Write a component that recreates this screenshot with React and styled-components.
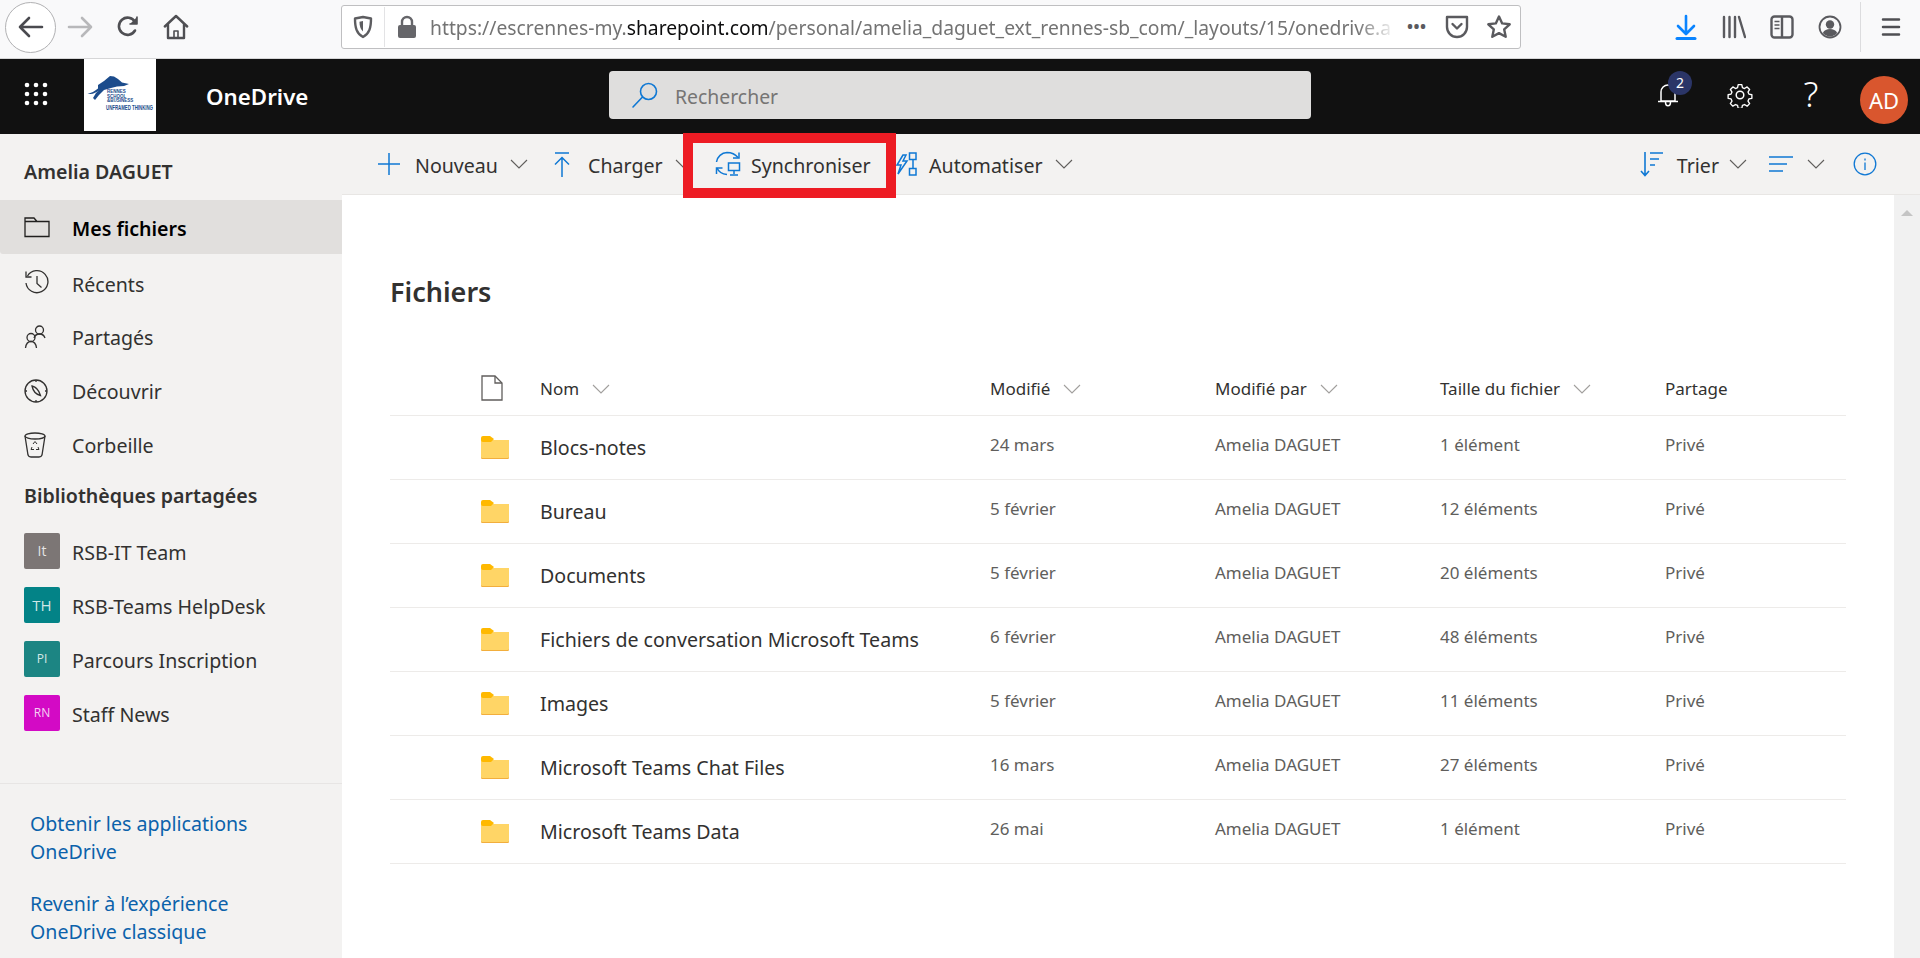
import React from 'react';
import styled, { createGlobalStyle } from 'styled-components';

const GlobalStyle = createGlobalStyle`
  html, body {
    margin: 0;
    padding: 0;
    height: 958px;
    overflow: hidden;
    background: #fff;
    font-family: "Noto Sans", "Open Sans", sans-serif;
    color: #323130;
  }
`;

const BLUE = '#0f78d4';

// ---- small drawings ----
const BackIcon = () => (
  <svg width="26" height="24" viewBox="0 0 26 24" fill="none" stroke="#4a4a4f" strokeWidth="2.6" strokeLinecap="round" strokeLinejoin="round">
    <path d="M2 12h22M11 3l-9 9 9 9" />
  </svg>
);
const ForwardIcon = () => (
  <svg width="26" height="24" viewBox="0 0 26 24" fill="none" stroke="#b8b8ba" strokeWidth="2.6" strokeLinecap="round" strokeLinejoin="round">
    <path d="M2 12h22M15 3l9 9-9 9" />
  </svg>
);
const ReloadIcon = () => (
  <svg width="24" height="24" viewBox="0 0 24 24" fill="none" stroke="#4f4f53" strokeWidth="2.6" strokeLinecap="round" strokeLinejoin="round">
    <path d="M19 15.500A8.600 8.600 0 1 1 19 7" />
    <path d="M21 2v7h-7" fill="#4f4f53" strokeWidth="1.600" />
  </svg>
);
const HomeIcon = () => (
  <svg width="26" height="26" viewBox="0 0 26 26" fill="none" stroke="#4f4f53" strokeWidth="2.400" strokeLinejoin="round" strokeLinecap="round">
    <path d="M1.800 12.500 13 2l11.200 10.500M5 10.500V24h16V10.500" />
    <path d="M11 24v-7h4v7" strokeWidth="1.600" />
  </svg>
);
const ShieldIcon = () => (
  <svg width="20" height="24" viewBox="0 0 20 24" fill="none">
    <path d="M10 2 2 3.500c0 9 1.500 15 8 18.500 6.500-3.500 8-9.500 8-18.500z" stroke="#5d5d60" strokeWidth="2.400" strokeLinejoin="round" />
    <path d="M10 6 6.500 6.800c0 4 .8 7.500 3.500 9.700z" fill="#5d5d60" />
  </svg>
);
const LockIcon = () => (
  <svg width="20" height="24" viewBox="0 0 20 24" fill="none">
    <path d="M5 11V7a5 5 0 0 1 10 0v4" stroke="#66666a" strokeWidth="2.400" />
    <rect x="1" y="10" width="18" height="13" rx="2" fill="#66666a" />
  </svg>
);
const PocketIcon = () => (
  <svg width="24" height="24" viewBox="0 0 24 24" fill="none" stroke="#5a5a5e" strokeWidth="2.400" strokeLinecap="round" strokeLinejoin="round">
    <path d="M2 2h20v10a10 10 0 0 1-20 0z" />
    <path d="m7.500 9 4.500 4.500L16.500 9" />
  </svg>
);
const StarIcon = () => (
  <svg width="26" height="26" viewBox="0 0 26 26" fill="none" stroke="#5a5a5e" strokeWidth="2.400" strokeLinejoin="round">
    <path d="m13 2.500 3.200 6.900 7.500.9-5.500 5.100 1.500 7.400-6.700-3.700-6.700 3.700 1.500-7.400-5.500-5.100 7.500-.9z" />
  </svg>
);
const DownloadIcon = () => (
  <svg width="22" height="26" viewBox="0 0 22 26" fill="none" stroke="#0a84ff" strokeWidth="2.600" strokeLinecap="round" strokeLinejoin="round">
    <path d="M11 2v17M3 12l8 8 8-8" />
    <path d="M2 24.500h18" strokeWidth="3" />
  </svg>
);
const LibraryIcon = () => (
  <svg width="24" height="24" viewBox="0 0 24 24" fill="none" stroke="#5a5a5e" strokeWidth="2.400" strokeLinecap="round">
    <path d="M2 2v20M7.500 2v20M13 2v20M17 2l6 20" />
  </svg>
);
const SidebarIcon = () => (
  <svg width="24" height="24" viewBox="0 0 24 24" fill="none" stroke="#5a5a5e" strokeWidth="2.400">
    <rect x="1.500" y="1.500" width="21" height="21" rx="3" />
    <path d="M12 2v20" />
    <path d="M4.500 6.500h5M4.500 10h5M4.500 13.500h5" strokeWidth="1.600" />
  </svg>
);
const AccountIcon = () => (
  <svg width="24" height="24" viewBox="0 0 24 24" fill="none">
    <circle cx="12" cy="12" r="10.500" stroke="#5a5a5e" strokeWidth="1.800" />
    <circle cx="12" cy="9.500" r="4.200" fill="#5a5a5e" />
    <path d="M4.800 18c1.500-3 4-4 7.200-4s5.700 1 7.200 4c-2 2.300-4.400 3.400-7.200 3.400S6.800 20.300 4.800 18z" fill="#5a5a5e" />
  </svg>
);
const MenuIcon = () => (
  <svg width="20" height="20" viewBox="0 0 20 20" stroke="#4f4f53" strokeWidth="2.500" strokeLinecap="round">
    <path d="M2 2.500h16M2 10h16M2 17.500h16" />
  </svg>
);

const LogoMark = () => (
  <svg width="72" height="72" viewBox="0 0 72 72">
    <path
      fill="#1c4c8c"
      d="M3.500 34.500C7 34.500 11 32 14 29.500V26l6-4 6-5 4 .5 4 2.500 4 3.500 7 1.500-5 2-7 .5-6 1.500-7 2-5 5-4 5-2-2 3-5 3-2.500c-3 2-7 4.500-11.500 3z"
    />
    <LogoText x="23" y="34" fontSize="4.500">RENNES</LogoText>
    <LogoText x="23" y="38.500" fontSize="4.500">SCHOOL</LogoText>
    <LogoText x="23" y="43" fontSize="4.500">&amp;BUSINESS</LogoText>
    <LogoText x="22" y="51" fontSize="7" textLength="47" lengthAdjust="spacingAndGlyphs">UNFRAMED THINKING</LogoText>
  </svg>
);

const WaffleIcon = () => (
  <svg width="24" height="24" viewBox="0 0 24 24" fill="#fff">
    {[3, 12, 21].flatMap((y) => [3, 12, 21].map((x) => <circle key={`${x}-${y}`} cx={x} cy={y} r="2.300" />))}
  </svg>
);
const SearchIcon = () => (
  <svg width="28" height="28" viewBox="0 0 28 28" fill="none" stroke={BLUE} strokeWidth="1.600" strokeLinecap="round">
    <circle cx="17.500" cy="10.500" r="8" />
    <path d="M11.500 16 2 26" />
  </svg>
);
const BellIcon = () => (
  <svg width="22" height="26" viewBox="0 0 22 26" fill="none" stroke="#fff" strokeWidth="1.500" strokeLinejoin="round">
    <path d="M4 19V10a7 7 0 0 1 14 0v9zM1 19.500h20M8.500 20c0 5 5 5 5 0" />
  </svg>
);
const GearIcon = () => (
  <svg width="26" height="26" viewBox="0 0 26 26" fill="none" stroke="#fff" strokeWidth="1.500" strokeLinejoin="round">
    <circle cx="13" cy="13" r="3.800" />
    <path d="M11 1.500h4l.7 3.300 2.300 1 2.900-1.800 2.800 2.800-1.800 2.900 1 2.300 3.300.7v4l-3.300.7-1 2.300 1.800 2.900-2.800 2.800-2.900-1.800-2.300 1-.7 3.300h-4l-.7-3.300-2.300-1-2.900 1.800-2.800-2.800 1.800-2.900-1-2.300-3.300-.7v-4l3.300-.7 1-2.300-1.800-2.900 2.800-2.800 2.900 1.800 2.300-1z" transform="translate(1.300 1.300) scale(.9)" />
  </svg>
);

const Chevron = ({ $color = '#605e5c' }) => (
  <svg width="18" height="10" viewBox="0 0 18 10" fill="none" stroke={$color} strokeWidth="1.100">
    <path d="m1 1 8 8 8-8" />
  </svg>
);
const PlusIcon = () => (
  <svg width="24" height="24" viewBox="0 0 24 24" stroke={BLUE} strokeWidth="1.500">
    <path d="M12 1v22M1 12h22" />
  </svg>
);
const UploadIcon = () => (
  <svg width="16" height="25" viewBox="0 0 16 25" fill="none" stroke={BLUE} strokeWidth="1.500">
    <path d="M1 1h14M8 25V5.500M1 12.500l7-7 7 7" />
  </svg>
);
const SyncIcon = () => (
  <svg width="26" height="26" viewBox="0 0 26 26" fill="none" stroke={BLUE} strokeWidth="1.500">
    <path d="M1.500 11A11 11 0 0 1 12 1.500c4.500 0 8.500 2 11 5" />
    <path d="M24 1.500v5.500h-6" />
    <path d="M2 17c1.500 3.500 5 6 10 6.500" />
    <path d="M1.500 23v-6h6" />
    <rect x="13.500" y="12" width="11" height="7.500" />
    <path d="M19 19.500v3.500M15 24h8" />
  </svg>
);
const FlowIcon = () => (
  <svg width="22" height="24" viewBox="0 0 22 24" fill="none" stroke={BLUE} strokeWidth="1.500">
    <path d="M8 3 2 13h4l-3 9 9-13H8l3-6z" />
    <rect x="14.500" y="1" width="6.500" height="6.500" />
    <rect x="14.500" y="16.500" width="6.500" height="6.500" />
    <path d="M18 7.500v9" />
  </svg>
);
const SortIcon = () => (
  <svg width="24" height="26" viewBox="0 0 24 26" fill="none" stroke={BLUE} strokeWidth="1.600">
    <path d="M5 1v23M1 20l4 4.500 4-4.500M10 2h13M10 8h9M10 14h5" />
  </svg>
);
const ViewIcon = () => (
  <svg width="24" height="18" viewBox="0 0 24 18" stroke={BLUE} strokeWidth="1.600">
    <path d="M0 2h24M0 9h18M0 16h14" />
  </svg>
);
const InfoIcon = () => (
  <svg width="24" height="24" viewBox="0 0 24 24" fill="none" stroke={BLUE} strokeWidth="1.300">
    <circle cx="12" cy="12" r="10.800" />
    <path d="M12 10.500V18M12 6.500V8.500" />
  </svg>
);

const FolderOutline = () => (
  <svg width="26" height="22" viewBox="0 0 26 22" fill="none" stroke="#201f1e" strokeWidth="1.300">
    <path d="M1 20.500V2h9l3 3.500h12v15zM1 5.500h12" />
  </svg>
);
const ClockIcon = () => (
  <svg width="26" height="26" viewBox="0 0 26 26" fill="none" stroke="#323130" strokeWidth="1.300">
    <path d="M3.500 6A11 11 0 1 1 2 13" />
    <path d="M2 1.500V7h5.500M13 6v7.500l4.500 4" />
  </svg>
);
const PeopleIcon = () => (
  <svg width="24" height="24" viewBox="0 0 24 24" fill="none" stroke="#323130" strokeWidth="1.300">
    <circle cx="15.500" cy="5" r="4" />
    <path d="M10 13c1-3 3-4 5.500-4s4.500 1 5.500 4" />
    <circle cx="7" cy="12.500" r="4" />
    <path d="M1.500 23c.5-4 2.500-6.500 5.500-6.500s5 2.500 5.500 6.500" />
  </svg>
);
const CompassIcon = () => (
  <svg width="24" height="24" viewBox="0 0 24 24" fill="none" stroke="#323130" strokeWidth="1.300">
    <circle cx="12" cy="12" r="11" />
    <path d="M8 7c3.500.8 7 4.300 8.500 9.500C12.500 15.500 9 12 8 7zM12 1v2M12 21v2M1 12h2M21 12h2" />
  </svg>
);
const BinIcon = () => (
  <svg width="22" height="26" viewBox="0 0 22 26" fill="none" stroke="#323130" strokeWidth="1.300">
    <ellipse cx="11" cy="4" rx="10" ry="3" />
    <path d="M1 4l3 19c.5 1.500 2 2 3 2h8c1 0 2.500-.5 3-2l3-19" />
    <path d="M9 12l2-2.500 2 2.500M8 15l-1 2.500h3M14 15l1 2.500h-3" strokeWidth="1" />
  </svg>
);

const FileIcon = () => (
  <svg width="22" height="26" viewBox="0 0 22 26" fill="#fff" stroke="#605e5c" strokeWidth="1.300">
    <path d="M1 1h13l7 7v17H1z" />
    <path d="M14 1v7h7" fill="none" />
  </svg>
);
const FolderIcon = () => (
  <svg width="28" height="23" viewBox="0 0 28 23">
    <path d="M0 4h28v17a2 2 0 0 1-2 2H2a2 2 0 0 1-2-2z" fill="#ffd566" />
    <path d="M0 21.500V21a2 2 0 0 0 2 1h24a2 2 0 0 0 2-1v.5a1.500 1.500 0 0 1-2 1.500H2a1.500 1.500 0 0 1-2-1.500z" fill="#f2ae3d" />
    <path d="M0 2a2 2 0 0 1 2-2h7l4 3-3 3H2a2 2 0 0 1-2-2z" fill="#ffb900" />
  </svg>
);

// ---- data ----
const navItems = [
  { label: 'Mes fichiers', icon: <FolderOutline />, active: true },
  { label: 'Récents', icon: <ClockIcon />, nudge: true },
  { label: 'Partagés', icon: <PeopleIcon /> },
  { label: 'Découvrir', icon: <CompassIcon /> },
  { label: 'Corbeille', icon: <BinIcon /> },
];

const sites = [
  { label: 'RSB-IT Team', short: 'It', color: '#7c7675', size: 14 },
  { label: 'RSB-Teams HelpDesk', short: 'TH', color: '#038387', size: 15 },
  { label: 'Parcours Inscription', short: 'PI', color: '#1c8583', size: 12 },
  { label: 'Staff News', short: 'RN', color: '#d30ac5', size: 12 },
];

const files = [
  ['Blocs-notes', '24 mars', '1 élément'],
  ['Bureau', '5 février', '12 éléments'],
  ['Documents', '5 février', '20 éléments'],
  ['Fichiers de conversation Microsoft Teams', '6 février', '48 éléments'],
  ['Images', '5 février', '11 éléments'],
  ['Microsoft Teams Chat Files', '16 mars', '27 éléments'],
  ['Microsoft Teams Data', '26 mai', '1 élément'],
];

const App = () => (
  <Page>
    <GlobalStyle />
    <BrowserBar>
      <BackButton><BackIcon /></BackButton>
      <NavButton><ForwardIcon /></NavButton>
      <NavButton><ReloadIcon /></NavButton>
      <NavButton><HomeIcon /></NavButton>
      <UrlBar>
        <UrlIcon $w={42}><ShieldIcon /></UrlIcon>
        <UrlDivider />
        <UrlIcon $w={44}><LockIcon /></UrlIcon>
        <UrlText>
          https://escrennes-my.<b>sharepoint.com</b>/personal/amelia_daguet_ext_rennes-sb_com/_layouts/15/onedrive.a
        </UrlText>
        <UrlDots>•••</UrlDots>
        <UrlIcon $w={42}><PocketIcon /></UrlIcon>
        <UrlIcon $w={42}><StarIcon /></UrlIcon>
      </UrlBar>
      <BrowserTools>
        <ToolButton><DownloadIcon /></ToolButton>
        <ToolButton><LibraryIcon /></ToolButton>
        <ToolButton><SidebarIcon /></ToolButton>
        <ToolButton><AccountIcon /></ToolButton>
        <ToolDivider />
        <MenuButton><MenuIcon /></MenuButton>
      </BrowserTools>
    </BrowserBar>

    <SuiteHeader>
      <Waffle><WaffleIcon /></Waffle>
      <LogoBox><LogoMark /></LogoBox>
      <AppName>OneDrive</AppName>
      <SearchBox>
        <SearchIcon />
        <SearchText>Rechercher</SearchText>
      </SearchBox>
      <HeaderIcons>
        <HeaderButton>
          <BellIcon />
          <Badge>2</Badge>
        </HeaderButton>
        <HeaderButton><GearIcon /></HeaderButton>
        <HelpMark>?</HelpMark>
        <Avatar>AD</Avatar>
      </HeaderIcons>
    </SuiteHeader>

    <Body>
      <Sidebar>
        <UserName>Amelia DAGUET</UserName>
        {navItems.map((item) => (
          <NavRow key={item.label} $active={item.active}>
            <NavIcon>{item.icon}</NavIcon>
            <NavLabel $down={item.active || item.nudge}>{item.label}</NavLabel>
          </NavRow>
        ))}
        <SectionTitle>Bibliothèques partagées</SectionTitle>
        {sites.map((site) => (
          <SiteRow key={site.label}>
            <SiteBadge $bg={site.color} $size={site.size}>{site.short}</SiteBadge>
            <SiteLabel>{site.label}</SiteLabel>
          </SiteRow>
        ))}
        <SideFooter>
          <SideLink>Obtenir les applications<br />OneDrive</SideLink>
          <SideLink>Revenir à l’expérience<br />OneDrive classique</SideLink>
        </SideFooter>
      </Sidebar>

      <Content>
        <CommandBar>
          <Command $w={177}><PlusIcon /><CommandLabel $l={14} $r={12}>Nouveau</CommandLabel><Chevron /></Command>
          <Command $w={161}><UploadIcon /><CommandLabel $l={18} $r={12}>Charger</CommandLabel><Chevron /></Command>
          <Command $w={180}><SyncIcon /><CommandLabel $l={10}>Synchroniser</CommandLabel></Command>
          <Command $w={200}><FlowIcon /><CommandLabel $l={12} $r={12}>Automatiser</CommandLabel><Chevron /></Command>
          <CommandRight>
            <Command><SortIcon /><CommandLabel $l={13} $r={10}>Trier</CommandLabel><Chevron /></Command>
            <Command><ViewIcon /><CommandLabel $l={14} /><Chevron /></Command>
            <InfoSpot><InfoIcon /></InfoSpot>
          </CommandRight>
          <Highlight />
        </CommandBar>

        <MainArea>
          <Main>
            <Title>Fichiers</Title>
            <HeaderRow>
              <TypeCell><FileIcon /></TypeCell>
              <HeadCell>Nom<Chevron $color="#a19f9d" /></HeadCell>
              <HeadCell>Modifié<Chevron $color="#a19f9d" /></HeadCell>
              <HeadCell>Modifié par<Chevron $color="#a19f9d" /></HeadCell>
              <HeadCell>Taille du fichier<Chevron $color="#a19f9d" /></HeadCell>
              <HeadCell>Partage</HeadCell>
            </HeaderRow>
            {files.map(([name, date, size]) => (
              <FileRow key={name}>
                <TypeCell><FolderIcon /></TypeCell>
                <NameCell>{name}</NameCell>
                <Cell>{date}</Cell>
                <Cell>Amelia DAGUET</Cell>
                <Cell>{size}</Cell>
                <Cell>Privé</Cell>
              </FileRow>
            ))}
          </Main>
          <ScrollTrack>
            <ScrollArrow />
          </ScrollTrack>
        </MainArea>
      </Content>
    </Body>
  </Page>
);

// Styled components
const LogoText = styled.text`
  font-family: "Liberation Sans", sans-serif;
  font-weight: 700;
  fill: #1c4c8c;
`;

const Page = styled.div`
  width: 1920px;
  height: 958px;
  display: flex;
  flex-direction: column;
  overflow: hidden;
`;

const BrowserBar = styled.div`
  height: 58px;
  flex: none;
  display: flex;
  align-items: center;
  padding-left: 5px;
  background: #f9f9fa;
  border-bottom: 1px solid #d6d6d7;
`;

const BackButton = styled.div`
  width: 49px;
  height: 49px;
  margin-top: -4px;
  border: 1px solid #b1b1b3;
  border-radius: 50%;
  background: #fff;
  display: flex;
  align-items: center;
  justify-content: center;
  flex: none;
`;

const NavButton = styled.div`
  width: 48px;
  height: 49px;
  margin-top: -4px;
  display: flex;
  align-items: center;
  justify-content: center;
  flex: none;
`;

const UrlBar = styled.div`
  width: 1180px;
  height: 44px;
  margin: -4px 0 0 141px;
  flex: none;
  display: flex;
  align-items: center;
  box-sizing: border-box;
  background: #fff;
  border: 1px solid #bfbfc1;
  border-radius: 3px;
`;

const UrlIcon = styled.div`
  width: ${(p) => p.$w}px;
  display: flex;
  justify-content: center;
  flex: none;
`;

const UrlDivider = styled.div`
  width: 1px;
  height: 40px;
  background: #e3e3e5;
  flex: none;
`;

const UrlText = styled.div`
  width: 966px;
  flex: none;
  margin-left: 1px;
  font-size: 19.300px;
  white-space: nowrap;
  overflow: hidden;
  color: #737373;
  -webkit-mask-image: linear-gradient(to right, #000 96%, transparent 100%);
  mask-image: linear-gradient(to right, #000 96%, transparent 100%);

  b {
    font-weight: 400;
    color: #0c0c0d;
  }
`;

const UrlDots = styled.div`
  width: 40px;
  flex: none;
  text-align: center;
  font-size: 20px;
  line-height: 20px;
  letter-spacing: -1px;
  color: #5a5a5e;
`;

const BrowserTools = styled.div`
  display: flex;
  align-items: center;
  margin: -4px 0 0 141px;
`;

const ToolButton = styled.div`
  width: 48px;
  display: flex;
  justify-content: center;
  flex: none;
`;

const ToolDivider = styled.div`
  width: 1px;
  height: 50px;
  margin-left: 6px;
  background: #dcdcde;
  flex: none;
`;

const MenuButton = styled.div`
  width: 60px;
  display: flex;
  justify-content: center;
  flex: none;
`;

const SuiteHeader = styled.header`
  height: 75px;
  flex: none;
  display: flex;
  align-items: flex-start;
  background: #111;
`;

const Waffle = styled.div`
  width: 71px;
  height: 70px;
  display: flex;
  align-items: center;
  justify-content: center;
  flex: none;
`;

const LogoBox = styled.div`
  width: 72px;
  height: 72px;
  margin-left: 13px;
  background: #fff;
  flex: none;
`;

const AppName = styled.div`
  width: 403px;
  margin-left: 50px;
  flex: none;
  font-size: 22.300px;
  font-weight: 600;
  line-height: 75px;
  color: #fff;
`;

const SearchBox = styled.div`
  width: 702px;
  height: 48px;
  margin-top: 12px;
  padding-left: 22px;
  box-sizing: border-box;
  display: flex;
  align-items: center;
  gap: 16px;
  flex: none;
  background: #dfdedd;
  border-radius: 4px;
`;

const SearchText = styled.span`
  padding-top: 2px;
  font-size: 19.400px;
  color: #767574;
`;

const HeaderIcons = styled.div`
  margin-left: auto;
  display: flex;
  align-items: flex-start;
  height: 75px;
  padding-right: 12px;
`;

const HeaderButton = styled.div`
  position: relative;
  width: 72px;
  height: 72px;
  display: flex;
  align-items: center;
  justify-content: center;
`;

const Badge = styled.span`
  position: absolute;
  left: 36px;
  top: 12px;
  width: 24px;
  height: 24px;
  border-radius: 50%;
  background: #2b3567;
  color: #fff;
  font-size: 14px;
  line-height: 24px;
  text-align: center;
`;

const HelpMark = styled.div`
  width: 70px;
  text-align: center;
  font-size: 35px;
  font-weight: 300;
  line-height: 70px;
  color: #fff;
`;

const Avatar = styled.div`
  width: 48px;
  height: 48px;
  margin: 17px 0 0 14px;
  border-radius: 50%;
  background: #d9562e;
  color: #fff;
  font-size: 22px;
  line-height: 48px;
  text-align: center;
`;

const Body = styled.div`
  flex: 1;
  min-height: 0;
  display: flex;
`;

const Sidebar = styled.nav`
  width: 342px;
  flex: none;
  display: flex;
  flex-direction: column;
  background: #f3f2f1;
  font-size: 19.600px;
`;

const UserName = styled.div`
  height: 66px;
  padding: 8px 0 0 24px;
  box-sizing: border-box;
  display: flex;
  align-items: center;
  font-weight: 600;
  flex: none;
`;

const NavRow = styled.div`
  height: 54px;
  flex: none;
  display: flex;
  align-items: center;
  margin-bottom: ${(p) => (p.$active ? '2px' : '0')};
  font-weight: ${(p) => (p.$active ? 600 : 400)};
  color: ${(p) => (p.$active ? '#000' : '#323130')};
  background: ${(p) => (p.$active ? '#e1dfdd' : 'transparent')};
  border-radius: 0 0 0 3px;
`;

const NavIcon = styled.span`
  width: 72px;
  padding-left: 24px;
  box-sizing: border-box;
  display: flex;
  flex: none;
`;

const NavLabel = styled.span`
  padding-top: ${(p) => (p.$down ? '2px' : '0')};
`;

const SiteLabel = styled.span`
  padding-top: 2px;
`;

const SectionTitle = styled.div`
  height: 46px;
  margin-bottom: 6px;
  padding-left: 24px;
  box-sizing: border-box;
  display: flex;
  align-items: center;
  font-weight: 600;
  flex: none;
`;

const SiteRow = styled.div`
  height: 54px;
  padding-left: 24px;
  display: flex;
  align-items: center;
  gap: 12px;
  flex: none;
`;

const SiteBadge = styled.span`
  width: 36px;
  height: 36px;
  flex: none;
  border-radius: 2px;
  background: ${(p) => p.$bg};
  font-family: "Open Sans", sans-serif;
  color: #ffffffd0;
  font-size: ${(p) => p.$size}px;
  line-height: 36px;
  text-align: center;
`;

const SideFooter = styled.div`
  margin-top: auto;
  height: 175px;
  box-sizing: border-box;
  padding: 26px 0 0 30px;
  border-top: 1px solid #e7e5e4;
  display: flex;
  flex-direction: column;
  gap: 24px;
`;

const SideLink = styled.a`
  color: #0b62ab;
  line-height: 28px;
`;

const Content = styled.div`
  flex: 1;
  min-width: 0;
  display: flex;
  flex-direction: column;
`;

const CommandBar = styled.div`
  position: relative;
  height: 61px;
  flex: none;
  box-sizing: border-box;
  padding-left: 35px;
  display: flex;
  align-items: center;
  background: #f3f2f1;
  border-bottom: 1px solid #e8e6e4;
  font-size: 19.600px;
`;

const Command = styled.div`
  display: flex;
  align-items: center;
  flex: none;
  width: ${(p) => (p.$w ? `${p.$w}px` : 'auto')};
`;

const CommandLabel = styled.span`
  margin: 0 ${(p) => p.$r || 0}px 0 ${(p) => p.$l || 0}px;
  padding-top: 2px;
  white-space: nowrap;
`;

const CommandRight = styled.div`
  margin-left: auto;
  padding-right: 43px;
  display: flex;
  align-items: center;
  gap: 22px;
`;

const InfoSpot = styled.span`
  display: flex;
  margin-left: 6px;
`;

// red annotation drawn over the toolbar
const Highlight = styled.div`
  position: absolute;
  left: 341px;
  top: -1px;
  width: 213px;
  height: 65px;
  box-sizing: border-box;
  border: 10px solid #ed1c24;
`;

const MainArea = styled.div`
  flex: 1;
  min-height: 0;
  display: flex;
`;

const Main = styled.main`
  flex: 1;
  min-width: 0;
  padding: 79px 48px 0;
  background: #fff;
`;

const Title = styled.h1`
  margin: 0 0 50px;
  font-size: 27px;
  font-weight: 600;
  line-height: 36px;
  color: #323130;
`;

const rowColumns = '150px 450px 225px 225px 225px 1fr';

const HeaderRow = styled.div`
  display: grid;
  grid-template-columns: ${rowColumns};
  height: 55px;
  align-items: center;
  border-bottom: 1px solid #edebe9;
  font-size: 17px;
`;

const FileRow = styled.div`
  display: grid;
  grid-template-columns: ${rowColumns};
  height: 64px;
  box-sizing: border-box;
  align-items: center;
  border-bottom: 1px solid #edebe9;
`;

const TypeCell = styled.div`
  padding-left: 91px;
  display: flex;
`;

const HeadCell = styled.div`
  display: flex;
  align-items: center;
  gap: 13px;
  padding-top: 2px;
  color: #323130;
`;

const NameCell = styled.div`
  font-size: 19.600px;
  color: #323130;
  white-space: nowrap;
`;

const Cell = styled.div`
  padding-bottom: 6px;
  font-size: 17px;
  color: #605e5c;
`;

const ScrollTrack = styled.div`
  width: 26px;
  flex: none;
  padding-top: 15px;
  box-sizing: border-box;
  background: #f1f1f1;
  display: flex;
  justify-content: center;
`;

const ScrollArrow = styled.div`
  width: 0;
  height: 0;
  border-left: 6px solid transparent;
  border-right: 6px solid transparent;
  border-bottom: 6px solid #c4c4c4;
`;

export default App;
